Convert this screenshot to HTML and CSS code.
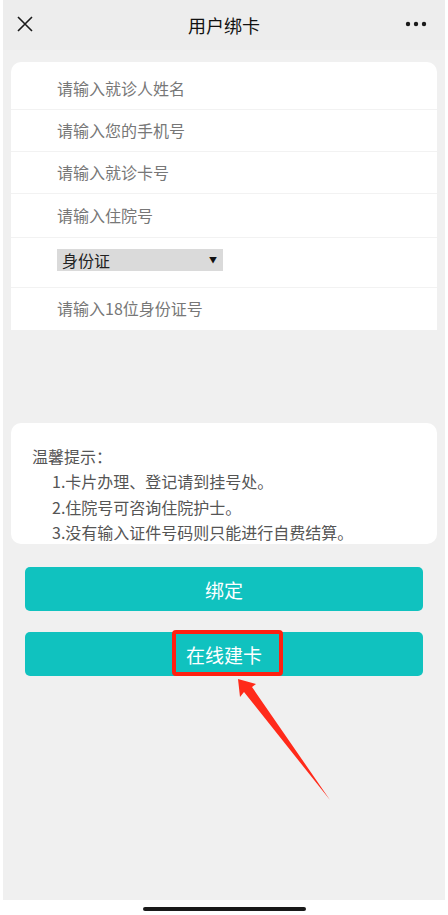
FILE: index.html
```html
<!DOCTYPE html>
<html lang="zh-CN">
<head>
<meta charset="utf-8">
<title>用户绑卡</title>
<link rel="stylesheet" href="styles.css">
</head>
<body>
<div class="phone">
  <header class="nav">
    <svg class="nav-close" width="16" height="16" viewBox="0 0 16 16"><path d="M1 1L15 15M15 1L1 15" stroke="#1a1a1a" stroke-width="1.6" fill="none"/></svg>
    <h1 class="nav-title">用户绑卡</h1>
    <svg class="nav-more" width="22" height="6" viewBox="0 0 22 6"><circle cx="3" cy="3" r="2.2" fill="#1a1a1a"/><circle cx="11" cy="3" r="2.2" fill="#1a1a1a"/><circle cx="19" cy="3" r="2.2" fill="#1a1a1a"/></svg>
  </header>
  <main class="main">
    <form class="form-card">
      <div class="row"><input class="field" type="text" placeholder="请输入就诊人姓名"></div>
      <div class="row"><input class="field" type="text" placeholder="请输入您的手机号"></div>
      <div class="row"><input class="field" type="text" placeholder="请输入就诊卡号"></div>
      <div class="row row-tall"><input class="field" type="text" placeholder="请输入住院号"></div>
      <div class="row row-select">
        <div class="select"><span>身份证</span><span class="caret">▼</span></div>
      </div>
      <div class="row row-last"><input class="field" type="text" placeholder="请输入18位身份证号"></div>
    </form>
    <section class="tips">
      <p class="tips-title">温馨提示：</p>
      <ol class="tips-list">
        <li>1.卡片办理、登记请到挂号处。</li>
        <li>2.住院号可咨询住院护士。</li>
        <li>3.没有输入证件号码则只能进行自费结算。</li>
      </ol>
    </section>
    <div class="actions">
      <button class="btn" type="button">绑定</button>
      <button class="btn btn-create" type="button">在线建卡<span class="highlight"></span></button>
    </div>
  </main>
  <svg class="arrow" width="100" height="130" viewBox="0 0 100 130">
    <polygon points="3,2 5,20 9,15 95,123 17,10 21,7" fill="#ff2a1a"/>
  </svg>
</div>
<div class="home-area"><div class="home-bar"></div></div>
</body>
</html>
```
FILE: styles.css
```css
* { box-sizing: border-box; }
html, body { margin: 0; padding: 0; background: #ffffff; }
body {
  font-family: "Noto Sans CJK SC", "Noto Sans", sans-serif;
  width: 448px;
  height: 915px;
  overflow: hidden;
}
.phone {
  position: relative;
  margin: 0 3px;
  height: 900px;
  background: #f0f0f0;
  display: flex;
  flex-direction: column;
}
.nav {
  height: 50px;
  background: #ededed;
  display: flex;
  align-items: center;
  justify-content: space-between;
  padding: 0 18px 0 14px;
  position: relative;
}
.nav-title {
  position: absolute;
  left: 0; right: 0;
  margin: 0;
  text-align: center;
  font-size: 18px;
  font-weight: 400;
  color: #111;
  line-height: 50px;
  pointer-events: none;
}
.nav-close { margin-top: -2px; }
.nav-more { margin-top: -2px; }
.main {
  padding: 12px 8px 0;
}
.form-card {
  background: #fff;
  border-radius: 10px 10px 0 0;
  padding-top: 6px;
  margin: 0;
}
.row {
  height: 42px;
  border-bottom: 1px solid #f2f2f2;
  display: flex;
  align-items: center;
  padding-left: 46px;
}
.row-tall { height: 44px; }
.row-select { height: 50px; }
.row-last { border-bottom: none; }
.field {
  border: none;
  outline: none;
  background: transparent;
  font: inherit;
  font-size: 16px;
  width: 300px;
  padding: 0;
  color: #333;
  margin-top: -2px;
}
.field::placeholder { color: #777; }
.select {
  width: 166px;
  height: 22px;
  background: #dadada;
  display: flex;
  align-items: center;
  justify-content: space-between;
  padding: 0 6px 0 5px;
  font-size: 16px;
  color: #222;
  margin-top: -6px;
}
.caret { font-size: 8px; color: #111; }
.tips {
  margin-top: 93px;
  background: #fff;
  border-radius: 10px;
  padding: 21px 0 0 21px;
  height: 121px;
  color: #555;
  font-size: 16px;
  line-height: 25.3px;
}
.tips-title { margin: 0; }
.tips-list {
  list-style: none;
  margin: 0;
  padding: 0 0 0 20px;
}
.actions {
  padding: 23px 14px 0;
  display: flex;
  flex-direction: column;
  gap: 21px;
}
.btn {
  position: relative;
  height: 44px;
  border: none;
  border-radius: 5px;
  background: #10c2bf;
  color: #fff;
  font: inherit;
  font-size: 19px;
  padding: 0;
}
.highlight {
  position: absolute;
  left: 147px;
  top: -2px;
  width: 111px;
  height: 46px;
  border: 4px solid #ff2010;
  border-radius: 4px;
}
.arrow {
  position: absolute;
  left: 232px;
  top: 677px;
}
.home-area {
  height: 15px;
  display: flex;
  justify-content: center;
  padding-top: 7px;
}
.home-bar {
  width: 163px;
  height: 4px;
  border-radius: 2px;
  background: #1a1a1a;
}
```
